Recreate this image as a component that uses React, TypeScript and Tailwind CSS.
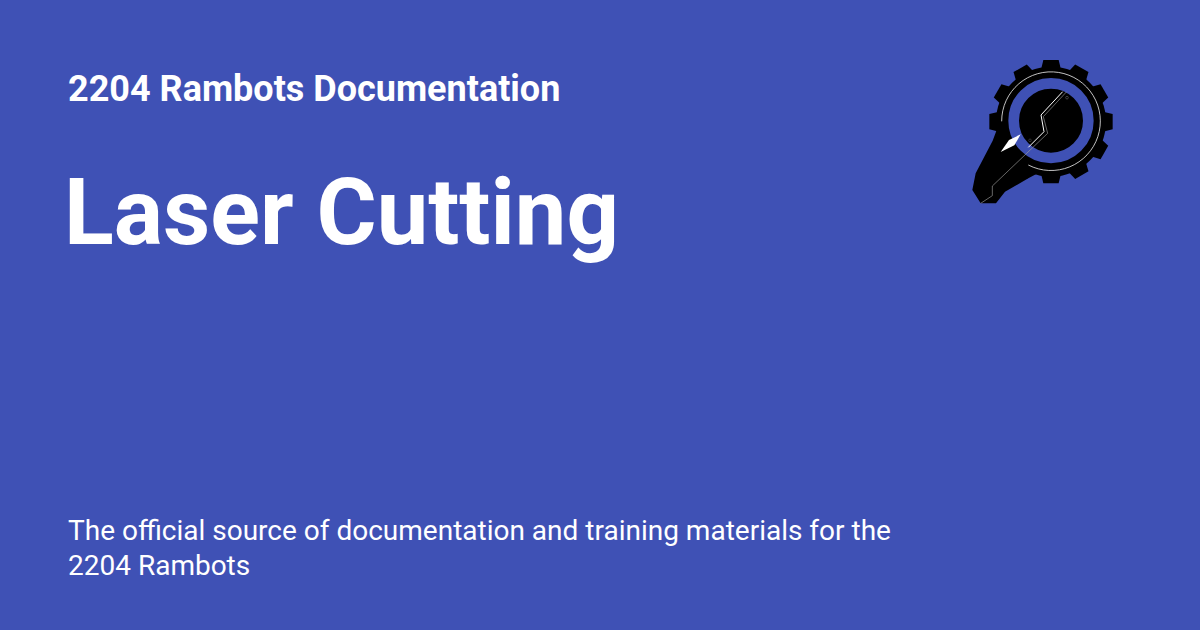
const teeth = [0, 30, 60, 90, 120, 150, 180, 210, 240, 270, 300, 330];

function Logo() {
  return (
    <svg viewBox="0 0 495 495" className="w-[165px] h-[165px] shrink-0">
      <g transform="translate(273 215)">
        <circle r="165" fill="#000" />
        {teeth.map((a) => (
          <polygon key={a} points="-30,-156 -23,-185 23,-185 30,-156" fill="#000" transform={`rotate(${a})`} />
        ))}
      </g>
      <polygon points="112,235 98,272 47,370 37,420 62,460 108,460 135,425 205,385 280,345" fill="#000" />
      <path d="M125 214 A148 148 0 1 1 205 345" fill="none" stroke="#e8e8e8" strokeWidth="2.5" />
      <circle cx="273" cy="212" r="112" fill="none" stroke="#3f51b5" strokeWidth="32" />
      <path d="M320 125 L250 200 L263 250 L97 408 L97 437 L62 460" fill="none" stroke="#9a9a9a" strokeWidth="2" />
      <path d="M308 125 L243 195 L252 245 L205 292" fill="none" stroke="#fff" strokeWidth="3" />
      <circle cx="321" cy="143" r="4" fill="none" stroke="#777" strokeWidth="1.5" />
      <circle cx="210" cy="271" r="4" fill="none" stroke="#555" strokeWidth="1.5" />
      <polygon points="182,253 147,270 122,306 163,286" fill="#fff" />
    </svg>
  );
}

export default function App() {
  return (
    <div className="w-[1200px] h-[630px] bg-[#3f51b5] text-white flex flex-col justify-between pl-[68px] pr-[75px] pt-[50px] pb-[47px] overflow-hidden font-['Roboto',sans-serif]">
      <div className="flex justify-between items-start">
        <div>
          <div className="text-[36px] leading-[76px] font-bold mt-[1px]">2204 Rambots Documentation</div>
          <h1 className="text-[92px] leading-[110px] font-bold mt-[31px] -ml-[4px]">Laser Cutting</h1>
        </div>
        <div>
          <Logo />
        </div>
      </div>
      <p className="text-[28px] leading-[35px] w-[880px]">
        The official source of documentation and training materials for the 2204 Rambots
      </p>
    </div>
  );
}
